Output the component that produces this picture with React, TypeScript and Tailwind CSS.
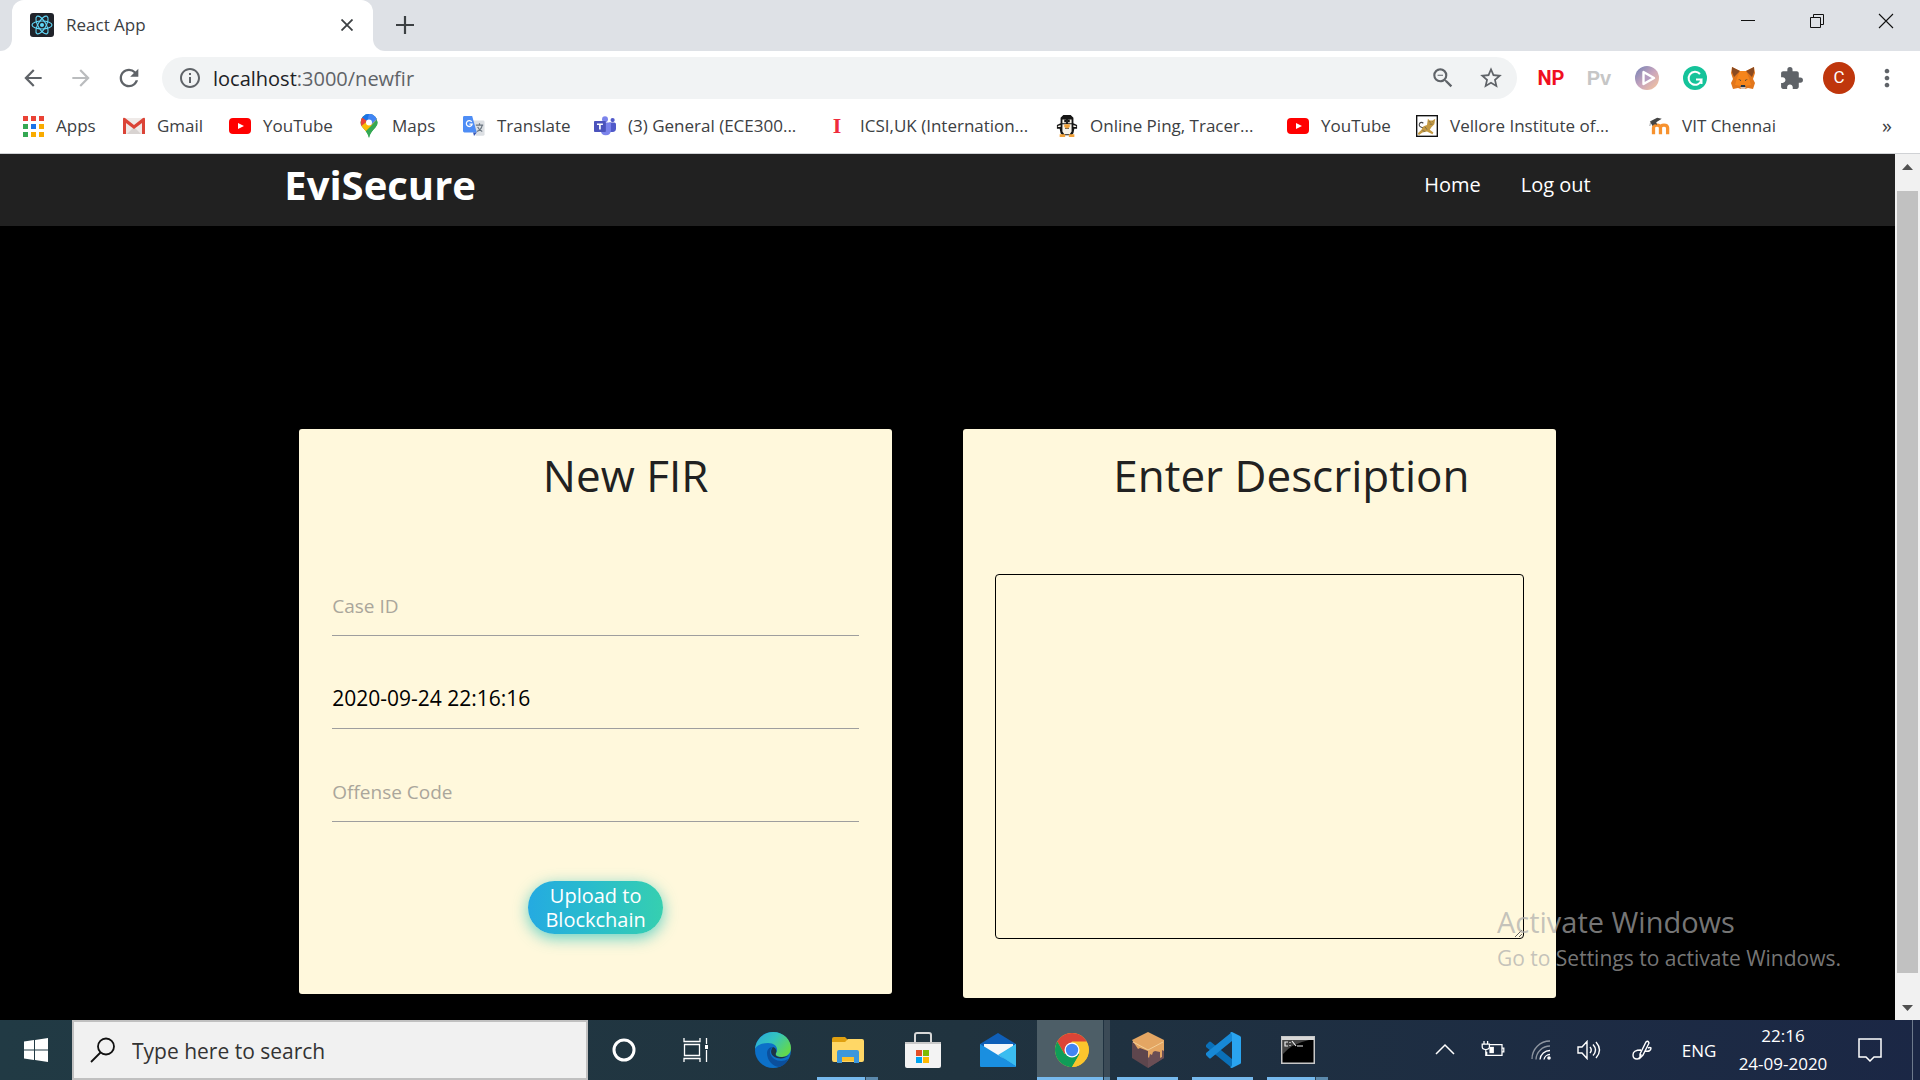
import React from 'react';
import {
  MdArrowBack,
  MdArrowForward,
  MdExtension,
  MdInfoOutline,
  MdMoreVert,
  MdRefresh,
  MdStarBorder,
  MdZoomOut,
} from 'react-icons/md';

interface Bookmark {
  label: string;
  icon: React.ReactNode;
  width: string;
}

const ReactLogo = () => (
  <svg viewBox="0 0 24 24" className="h-6 w-6">
    <rect width="24" height="24" rx="3" fill="#20232a" />
    <g fill="none" stroke="#61dafb" strokeWidth="1.1">
      <ellipse cx="12" cy="12" rx="10" ry="4" />
      <ellipse cx="12" cy="12" rx="10" ry="4" transform="rotate(60 12 12)" />
      <ellipse cx="12" cy="12" rx="10" ry="4" transform="rotate(120 12 12)" />
    </g>
    <circle cx="12" cy="12" r="2" fill="#61dafb" />
  </svg>
);

const AppsIcon = () => (
  <svg viewBox="0 0 22 22" className="h-[22px] w-[22px]">
    <path fill="#ea4335" d="M1 1h5v5H1zM9 1h5v5H9zM17 1h5v5h-5z" />
    <path fill="#34a853" d="M1 9h5v5H1zM1 17h5v5H1z" />
    <path fill="#1a73e8" d="M9 9h5v5H9z" />
    <path fill="#f9ab00" d="M17 9h5v5h-5zM9 17h5v5H9zM17 17h5v5h-5z" />
  </svg>
);

const GmailIcon = () => (
  <svg viewBox="0 0 22 18" className="h-[18px] w-[22px]">
    <rect x="1" y="1" width="20" height="16" rx="1.5" fill="#efeae8" />
    <path fill="#d8d3d1" d="M4 17 11 10l7 7z" />
    <path fill="#db4437" d="M0 2Q0 0 2 1l9 7 9-7q2-1 2 1v15h-3V6l-8 6-8-6v11H0z" />
  </svg>
);

const YouTubeIcon = () => (
  <svg viewBox="0 0 22 18" className="h-[18px] w-[22px]">
    <rect y="1" width="22" height="16" rx="4" fill="#f00" />
    <path fill="#fff" d="m9 6 6 3-6 3z" />
  </svg>
);

const MapsIcon = () => (
  <svg viewBox="0 0 18 24" className="h-6 w-[18px]">
    <clipPath id="pin">
      <path d="M9 0a8.5 8.5 0 0 1 8.5 8.5C17.5 14 10.5 16 9 24 7.5 16 .5 14 .5 8.5A8.5 8.5 0 0 1 9 0z" />
    </clipPath>
    <g clipPath="url(#pin)">
      <path fill="#34a853" d="M0 0h18v24H0z" />
      <path fill="#4285f4" d="M5 0h13v5L9 13z" />
      <path fill="#1a73e8" d="M0 0h9l-1 6-4 3z" />
      <path fill="#ea4335" d="M0 2 7 7l-6 7z" />
      <path fill="#fbbc04" d="m18 4-7 8-6 6-5-5 9-7z" />
      <path fill="#34a853" d="m18 5-8 9-6 5 5 5h9z" />
      <path fill="#4285f4" d="M9 0h9v4l-7 7-3-5z" />
    </g>
    <circle cx="9" cy="8.5" r="3" fill="#fff" />
  </svg>
);

const TranslateIcon = () => (
  <svg viewBox="0 0 24 22" className="h-[22px] w-6">
    <path fill="#dcdfe3" d="M10 5h12q1.5 0 1.5 1.5V20q0 1.5-1.5 1.5h-8z" />
    <path fill="none" stroke="#6b7680" strokeWidth="1.3" d="M14 10h8M18 8v2M21 10q-1 5-6 7M16 12q1 3 5 5" />
    <path fill="#4e8df5" d="M1.5 0H10l5 18H1.5Q0 18 0 16.5v-15Q0 0 1.5 0z" />
    <path fill="#3454b4" d="m11 18 4 0-3 4z" />
    <path fill="none" stroke="#fff" strokeWidth="1.4" d="M9.5 6.5A3.2 3.2 0 1 0 10 9H7" />
  </svg>
);

const TeamsIcon = () => (
  <svg viewBox="0 0 26 24" className="h-6 w-6">
    <circle cx="13" cy="4" r="3.5" fill="#7b83eb" />
    <circle cx="22" cy="5" r="2.5" fill="#5059c9" />
    <path fill="#5059c9" d="M18 8h6q2 0 2 2v5q0 4-4 4h-4z" />
    <path fill="#7b83eb" d="M8 8h12v9q0 6-6 6t-6-6z" />
    <rect y="6" width="14" height="13" rx="1" fill="#4b53bc" />
    <path fill="#fff" d="M3.5 9h7v1.8H8V16H6v-5.2H3.500z" />
  </svg>
);

const SerifMark = () => (
  <span className="font-['Liberation_Serif',serif] text-[22px] leading-6 font-bold text-[#ef2b3c]">I</span>
);

const PenguinIcon = () => (
  <svg viewBox="0 0 24 24" className="h-6 w-6">
    <path fill="#151515" d="M8 0h8l3 3v6l4 2v4h-3l-1 5-2 2H7l-2-2-1-5H1v-4l4-2V3z" />
    <path fill="#f7f3ea" d="M7 5h4v4H7zM13 5h4v4h-4zM7 10h10v8l-2 3H9l-2-3zM2 12l3-1v2H2zM22 12l-3-1v2h3z" />
    <path fill="#151515" d="M9 5h2v3H9zM13 5h2v3h-2zM10 14h4v1h-4z" />
    <path fill="#f2a23a" d="M9 10h6v3l-3 2-3-2zM4 21h6v3H4zM14 21h6v3h-6z" />
  </svg>
);

const TigerIcon = () => (
  <svg viewBox="0 0 24 24" className="h-6 w-6">
    <rect x=".75" y=".75" width="22.5" height="22.5" fill="#fff" stroke="#111" strokeWidth="1.5" />
    <path fill="none" stroke="#444" strokeWidth="1.2" d="M8 14q-6-1-4-5 2-2 4 0" />
    <path fill="#c59a42" d="M13 4l2 2h3l3-2-1 6-3 3-2 3 4 3-1 2-6-3-5 1-4 3-1-2 4-4q1-4 6-5z" />
    <path stroke="#555" strokeWidth=".7" fill="none" d="m10 13 2 3M7 17l3 1M14 7l2 1M18 7l1 1M15 10h3" />
  </svg>
);

const MoodleIcon = () => (
  <svg viewBox="0 0 24 20" className="h-5 w-6">
    <path fill="none" stroke="#f7922f" strokeWidth="3.6" d="M6 19v-7q0-3 3.8-3t3.800 3v7M13.6 12q0-3 3.8-3t4 3v7" />
    <path fill="#444" d="m2 5 8-4 5 1-6 4 1 3q-3-2-5 1z" />
    <path fill="none" stroke="#999" d="M3 5 2 10" />
  </svg>
);

const bookmarks: Bookmark[] = [
  { label: 'Apps', icon: <AppsIcon />, width: 'w-[101px]' },
  { label: 'Gmail', icon: <GmailIcon />, width: 'w-[106px]' },
  { label: 'YouTube', icon: <YouTubeIcon />, width: 'w-[129px]' },
  { label: 'Maps', icon: <MapsIcon />, width: 'w-[105px]' },
  { label: 'Translate', icon: <TranslateIcon />, width: 'w-[131px]' },
  { label: '(3) General (ECE300...', icon: <TeamsIcon />, width: 'w-[232px]' },
  { label: 'ICSI,UK (Internation...', icon: <SerifMark />, width: 'w-[230px]' },
  { label: 'Online Ping, Tracer...', icon: <PenguinIcon />, width: 'w-[231px]' },
  { label: 'YouTube', icon: <YouTubeIcon />, width: 'w-[129px]' },
  { label: 'Vellore Institute of...', icon: <TigerIcon />, width: 'w-[232px]' },
  { label: 'VIT Chennai', icon: <MoodleIcon />, width: 'w-[130px]' },
];

const PlayIcon = () => (
  <svg viewBox="0 0 24 24" className="h-6 w-6">
    <defs>
      <linearGradient id="play" x1="0" y1="0" x2="1" y2="1">
        <stop offset="0" stopColor="#6f7fb5" />
        <stop offset=".5" stopColor="#c8a5bd" />
        <stop offset="1" stopColor="#f8c79b" />
      </linearGradient>
    </defs>
    <circle cx="12" cy="12" r="12" fill="url(#play)" />
    <path fill="#b59cc0" stroke="#fff" strokeWidth="2.4" strokeLinejoin="round" d="M8.5 6v12L19 12z" />
  </svg>
);

const GrammarlyIcon = () => (
  <svg viewBox="0 0 24 24" className="h-6 w-6">
    <circle cx="12" cy="12" r="12" fill="#15c39a" />
    <path fill="none" stroke="#fff" strokeWidth="2" d="M17 8a6.500 6.500 0 1 0 1.500 5.500H13M18.500 13v5" />
  </svg>
);

const FoxIcon = () => (
  <svg viewBox="0 0 24 24" className="h-6 w-6">
    <path fill="#e2761b" d="m1 1 8 4h6l8-4 1 6-2 6 2 4-2 6-5-1-3 1h-4l-3-1-5 1-2-6 2-4-2-6z" />
    <path fill="#8a4a20" d="m1 1 8 4-6 6-2-5zM23 1l-8 4 6 6 2-5z" />
    <path fill="#f6851b" d="M9 5h6l3 7 2 7-6 1h-4l-6-1 2-7z" />
    <path fill="#233447" d="m7 13 3 1v1zM17 13l-3 1v1zM10 19h4l.5 3h-5z" />
    <path fill="#d7c1b3" d="M9 21h6l-1 2h-4z" />
  </svg>
);

const toolbarCell = 'flex h-10 w-12 items-center justify-center';

const BrowserChrome = () => (
  <header className="text-[#3c4043]">
    <div className="flex h-[51px] bg-white">
      <div className="w-3 rounded-br-xl bg-[#dee1e6]" />
      <div className="flex w-[361px] items-center bg-[#dee1e6]">
        <div className="flex h-full w-full items-center rounded-t-xl bg-white pr-4 pb-px pl-[18px]">
          <ReactLogo />
          <span className="ml-3 flex-1 text-[17px]">React App</span>
          <button type="button" aria-label="Close tab" className="flex h-5 w-5 items-center justify-center">
            <svg viewBox="0 0 12 12" className="h-3 w-3">
              <path stroke="#3c4043" strokeWidth="1.8" d="m.5.5 11 11M11.5.5l-11 11" />
            </svg>
          </button>
        </div>
      </div>
      <div className="flex flex-1 rounded-bl-xl bg-[#dee1e6]">
        <button type="button" aria-label="New tab" className="flex h-[50px] w-16 items-center justify-center">
          <svg viewBox="0 0 18 18" className="h-[18px] w-[18px]">
            <path stroke="#3c4043" strokeWidth="2.2" d="M9 0v18M0 9h18" />
          </svg>
        </button>
        <div className="flex-1" />
        <button type="button" aria-label="Minimize" className="flex h-[42px] w-[69px] items-center justify-center">
          <svg viewBox="0 0 16 16" className="h-4 w-4">
            <path stroke="#111" d="M1 7.5h14" />
          </svg>
        </button>
        <button type="button" aria-label="Restore" className="flex h-[42px] w-[69px] items-center justify-center">
          <svg viewBox="0 0 16 16" className="h-4 w-4">
            <path fill="none" stroke="#111" d="M1.5 4.500h10v10h-10zM4.500 4V1.500h10v10H12" />
          </svg>
        </button>
        <button type="button" aria-label="Close" className="flex h-[42px] w-[69px] items-center justify-center">
          <svg viewBox="0 0 16 16" className="h-4 w-4">
            <path stroke="#111" strokeWidth="1.1" d="m1 1 14 14M15 1 1 15" />
          </svg>
        </button>
      </div>
    </div>

    <div className="flex items-center bg-white pt-[6px] pr-[9px] pl-[9px]">
      <button type="button" aria-label="Back" className={toolbarCell}>
        <MdArrowBack size={26} color="#5f6368" />
      </button>
      <button type="button" aria-label="Forward" className={toolbarCell}>
        <MdArrowForward size={26} color="#babcbe" />
      </button>
      <button type="button" aria-label="Reload" className={toolbarCell}>
        <MdRefresh size={28} color="#5f6368" />
      </button>
      <div className="ml-[9px] flex h-[42px] flex-1 items-center rounded-full bg-[#f1f3f4] pr-[2px] pl-4">
        <MdInfoOutline size={24} color="#5f6368" />
        <button type="button" className="ml-[11px] flex-1 pt-[2px] text-left text-[20px] text-[#5f6368]">
          <span className="text-[#202124]">localhost</span>:3000/newfir
        </button>
        <button type="button" aria-label="Zoom" className={toolbarCell}>
          <MdZoomOut size={26} color="#5f6368" />
        </button>
        <button type="button" aria-label="Bookmark this page" className={toolbarCell}>
          <MdStarBorder size={26} color="#5f6368" />
        </button>
      </div>
      <div className="ml-[10px] flex items-center">
        <button type="button" className={toolbarCell}>
          <span className="font-['Roboto',sans-serif] text-[20px] font-bold text-[#f00f1f]">NP</span>
        </button>
        <button type="button" className={toolbarCell}>
          <span className="font-['Liberation_Sans',sans-serif] text-[20px] font-bold text-[#c6c6c6]">Pv</span>
        </button>
        <button type="button" aria-label="Player" className={toolbarCell}><PlayIcon /></button>
        <button type="button" aria-label="Grammarly" className={toolbarCell}><GrammarlyIcon /></button>
        <button type="button" aria-label="MetaMask" className={toolbarCell}><FoxIcon /></button>
        <button type="button" aria-label="Extensions" className={toolbarCell}>
          <MdExtension size={25} color="#5f6368" />
        </button>
        <button type="button" className={toolbarCell}>
          <span className="flex h-8 w-8 items-center justify-center rounded-full bg-[#bf360c] font-['Roboto',sans-serif] text-[17px] text-white">C</span>
        </button>
        <button type="button" aria-label="Menu" className={toolbarCell}>
          <MdMoreVert size={28} color="#5f6368" />
        </button>
      </div>
    </div>

    <div className="flex h-[55px] items-center border-b border-[#d0d2d5] bg-white pr-7 pb-px pl-[22px] text-[17px]">
      {bookmarks.map((b, i) => (
        <a key={i} href="#" className={`flex shrink-0 items-center whitespace-nowrap ${b.width}`}>
          <span className="flex w-[22px] shrink-0 justify-center">{b.icon}</span>
          <span className="ml-3">{b.label}</span>
        </a>
      ))}
      <button type="button" className="ml-auto text-[20px]">»</button>
    </div>
  </header>
);

const SiteNav = () => (
  <nav className="bg-[#212121] pb-[11px] text-white">
    <div className="mx-auto flex h-[61px] w-[70%] items-center justify-between">
      <a href="#" className="text-[40px] leading-none font-bold">EviSecure</a>
      <div className="flex text-[20px]">
        <a href="#" className="px-5">Home</a>
        <a href="#" className="px-5">Log out</a>
      </div>
    </div>
  </nav>
);

const fieldClass =
  'mb-7 block h-[65px] w-full border-b border-[#9e9e9e] bg-transparent pt-1 outline-none placeholder:text-[19px] placeholder:text-[#aaa69b]';

const NewFir = () => (
  <main className="bg-black pt-[203px] pb-[22px]">
    <form className="mx-auto grid w-[70%] grid-cols-2 items-start gap-[71px] pr-[55px] pl-[15px] text-[#212121]">
      <section className="rounded-[3px] bg-[#fff8dc] px-[33px] pt-4 pb-[60px]">
        <h1 className="pl-15 text-center text-[44px] leading-[60px]">New FIR</h1>
        <div className="pt-[66px] text-[21px] text-black">
          <input aria-label="Case ID" placeholder="Case ID" className={fieldClass} />
          <input aria-label="Date and time" defaultValue="2020-09-24 22:16:16" className={fieldClass} />
          <input aria-label="Offense Code" placeholder="Offense Code" className={fieldClass} />
        </div>
        <button
          type="button"
          className="mx-auto mt-[59px] block h-[53px] w-[135px] rounded-full bg-linear-to-r from-[#25aae1] to-[#36cfb0] text-[20px] leading-6 text-white shadow-[0_4px_15px_rgba(49,196,190,0.75)]"
        >
          Upload to Blockchain
        </button>
      </section>
      <section className="rounded-[3px] bg-[#fff8dc] px-8 pt-4 pb-[59px]">
        <h1 className="pl-16 text-center text-[44px] leading-[60px]">Enter Description</h1>
        <textarea
          aria-label="Description"
          className="mt-[69px] block h-[365px] w-full resize rounded border border-black bg-transparent outline-none"
        />
      </section>
    </form>
  </main>
);

const Scrollbar = () => (
  <div className="flex w-[25px] flex-col items-center bg-[#f1f1f1]">
    <svg viewBox="0 0 25 25" className="h-[25px] w-[25px]"><path fill="#505050" d="m7 16 5.5-6 5.500 6z" /></svg>
    <div className="mt-3 mb-[22px] w-[21px] flex-1 bg-[#c1c1c1]" />
    <svg viewBox="0 0 25 25" className="h-[25px] w-[25px]"><path fill="#505050" d="m7 10 5.5 6 5.500-6z" /></svg>
  </div>
);

const EdgeIcon = () => (
  <svg viewBox="0 0 36 36" className="h-9 w-9">
    <defs>
      <linearGradient id="edgeTop" x1="0" y1="0" x2="1" y2=".6">
        <stop offset="0" stopColor="#2aa7dc" />
        <stop offset=".5" stopColor="#33c3c0" />
        <stop offset="1" stopColor="#62d84e" />
      </linearGradient>
    </defs>
    <circle cx="18" cy="18" r="18" fill="#0c70c8" />
    <path fill="url(#edgeTop)" d="M0 17C1 7 9 0 18 0c11 0 18 8 18 16 0 6-5 9-9 9-5 0-7-2-6-4 3-4 0-10-8-10C7 11 2 13 0 17z" />
    <path fill="#0b4f9c" d="M12 21c0 7 5 13 12 14 4-1 8-4 9-8-6 4-16 2-18-6 0-3 1-5 3-6-4 0-6 3-6 6z" />
    <path fill="#1d3445" d="M18 15c-3 3-3 9 4 11 5 1 9 0 12-3-3 2-6 2-8 2-5 0-6-2-5-4 1-2 0-5-3-6z" />
  </svg>
);

const FolderIcon = () => (
  <svg viewBox="0 0 34 30" className="h-[30px] w-[34px]">
    <path fill="#e0a010" d="M1 4q0-2 2-2h11l3 3-2 4H1z" />
    <path fill="#ffd766" d="M1 7h13l3-3h14q2 0 2 2v19q0 2-2 2H3q-2 0-2-2z" />
    <path fill="#3c97dd" d="M6 17q0-2 2-2h18q2 0 2 2v11h-5v-6H11v6H6z" />
    <path fill="#fbc02d" d="M11 22h12v4H11z" />
  </svg>
);

const StoreIcon = () => (
  <svg viewBox="0 0 36 36" className="h-9 w-9">
    <path fill="none" stroke="#d8d8d8" strokeWidth="2" d="M10 12V3q0-2 2-2h12q2 0 2 2v9" />
    <path fill="#f3f3f3" d="M0 10h36v24q0 2-2 2H2q-2 0-2-2z" />
    <path fill="#c9c9c9" d="M0 10h36v2H0z" />
    <path fill="#e34f26" d="M11 18h6v6h-6z" />
    <path fill="#7fba00" d="M18 18h6v6h-6z" />
    <path fill="#00a4ef" d="M11 25h6v6h-6z" />
    <path fill="#ffb900" d="M18 25h6v6h-6z" />
  </svg>
);

const MailIcon = () => (
  <svg viewBox="0 0 36 34" className="h-[34px] w-9">
    <path fill="#0f5fb8" d="M0 11 18 0l18 11v6H0z" />
    <path fill="#f5f7f9" d="M4 11h29v9l-14 8L4 20z" />
    <path fill="#35b5ee" d="m36 11-18 11L36 34z" />
    <path fill="#1a8fe0" d="m0 11 36 22q0 1-1 1H1q-1 0-1-1z" />
    <path fill="#3bbdf0" d="m36 11-16 11 16 11z" />
  </svg>
);

const ChromeIcon = () => (
  <svg viewBox="0 0 34 34" className="h-[34px] w-[34px]">
    <circle cx="17" cy="17" r="17" fill="#fbc52d" />
    <path fill="#db4437" d="M2.3 8.500A17 17 0 0 1 31.700 8.500H17L9.500 21z" />
    <path fill="#109d58" d="M2.3 8.500A17 17 0 0 0 17 34l7.500-13-7.500-4-7.500 4z" />
    <path fill="#fbc52d" d="M17 34A17 17 0 0 0 31.700 9H17l7.500 12.500z" />
    <circle cx="17" cy="17" r="7.500" fill="#fff" />
    <circle cx="17" cy="17" r="6.200" fill="#4285f4" />
  </svg>
);

const GanacheIcon = () => (
  <svg viewBox="0 0 32 36" className="h-9 w-8">
    <path fill="#5e464d" d="m0 10 16-8 16 8v16L16 36 0 26z" />
    <path fill="#6a4e55" d="M16 18 32 10v16L16 36z" />
    <path fill="#e4a663" d="m0 8 16-8 16 8v11l-2-1v7l-2 1v-6l-5-1-2 1-1 3-2-1-1 4-1-1v-6l-8-3-2 1-2-3z" />
    <path fill="none" stroke="#f3cf98" d="m1 10 15 8 15-8" />
  </svg>
);

const VsCodeIcon = () => (
  <svg viewBox="0 0 36 36" className="h-9 w-9">
    <path fill="#0a70b8" d="m1 13 3-3q1-1 2 0l21 17v9L1 15z" />
    <path fill="#1789d6" d="m1 23 3 3q1 1 2 0L27 9V0L1 21z" />
    <path fill="#2aa4ef" d="m27 0 8 4q1 .5 1 1.500v25q0 1-1 1.500l-8 4q-1 0-2-1 2 0 2-2V3q0-2-2-2 1-1 2-1z" />
  </svg>
);

const TerminalIcon = () => (
  <svg viewBox="0 0 34 28" className="h-7 w-[34px]">
    <rect x=".75" y=".75" width="32.5" height="26.500" fill="#000" stroke="#c8c8c8" strokeWidth="1.5" />
    <path fill="#d8d8d8" d="M1 1h32v3H1z" />
    <path fill="#444" d="M2 4h26Q10 8 2 18z" />
    <path fill="none" stroke="#eee" strokeWidth="1.2" d="M7 6H4v4h3M9 6v1M9 9v1M11 5l4 5M16 10h6" />
  </svg>
);

interface TaskButtonProps {
  label: string;
  children: React.ReactNode;
  running?: boolean;
  stacked?: boolean;
}

const TaskButton: React.FC<TaskButtonProps> = ({ label, children, running, stacked }) => (
  <button type="button" aria-label={label} className="flex h-full w-[75px] flex-col items-center">
    <span className="flex flex-1 items-center pt-[3px]">{children}</span>
    <span className="flex h-[3px] w-[61px]">
      {running && <span className="flex-1 bg-[#76b9ed]" />}
      {stacked && <span className="w-[13px] border-l border-[#2b4152] bg-[#5b89ac]" />}
    </span>
  </button>
);

const trayButton = 'flex h-full w-12 items-center justify-center';

const Taskbar = () => (
  <footer className="flex h-[60px] bg-linear-to-r from-[#213a44] via-[#20333f] to-[#1b2745] text-white">
    <button type="button" aria-label="Start" className="flex w-[72px] items-center justify-center">
      <svg viewBox="0 0 24 24" className="h-6 w-6">
        <path fill="#fff" d="m0 3.5 10-1.500v9.500H0zM11 1.900 24 0v11.500H11zM0 12.500h10V22L0 20.500zM11 12.500h13V24l-13-1.900z" />
      </svg>
    </button>
    <div className="flex w-[516px] items-center border-2 border-[#c0c0c0] bg-[#f1f1f1] pl-4">
      <svg viewBox="0 0 26 26" className="h-[26px] w-[26px]">
        <circle cx="16" cy="9.5" r="8" fill="none" stroke="#111" strokeWidth="1.8" />
        <path stroke="#111" strokeWidth="1.8" d="M10.5 15.500 1 25" />
      </svg>
      <input
        aria-label="Type here to search"
        placeholder="Type here to search"
        className="ml-4 flex-1 bg-transparent pt-1 text-[21px] outline-none placeholder:text-[#333]"
      />
    </div>
    <button type="button" aria-label="Cortana" className="flex w-[72px] items-center justify-center">
      <svg viewBox="0 0 24 24" className="h-6 w-6">
        <circle cx="12" cy="12" r="10" fill="none" stroke="#fff" strokeWidth="3" />
      </svg>
    </button>
    <button type="button" aria-label="Task view" className="flex w-[72px] items-center justify-center">
      <svg viewBox="0 0 26 24" className="h-6 w-[26px]">
        <path fill="none" stroke="#fff" strokeWidth="1.3" d="M1 0v3.500h16V0M1 24v-3.500h16V24M1.500 6.500h15v11h-15zM23.500 0v6M23.500 12v12" />
        <path fill="#fff" d="M22 7h3v4h-3z" />
      </svg>
    </button>
    <div className="flex pl-[3px]">
      <TaskButton label="Microsoft Edge"><EdgeIcon /></TaskButton>
      <TaskButton label="File Explorer" running stacked><FolderIcon /></TaskButton>
      <TaskButton label="Microsoft Store"><StoreIcon /></TaskButton>
      <TaskButton label="Mail"><MailIcon /></TaskButton>
      <button type="button" aria-label="Google Chrome" className="ml-[2px] flex w-[73px]">
        <span className="flex h-full w-[66px] flex-col items-center justify-center border-b-[3px] border-[#76b9ed] bg-[#4d5e67] pt-[3px] pl-1">
          <ChromeIcon />
        </span>
        <span className="ml-px h-full w-[6px] border-b-[3px] border-[#5b89ac] bg-[#3b4a56]" />
      </button>
      <TaskButton label="Ganache" running><GanacheIcon /></TaskButton>
      <TaskButton label="Visual Studio Code" running><VsCodeIcon /></TaskButton>
      <TaskButton label="Command Prompt" running stacked><TerminalIcon /></TaskButton>
    </div>

    <div className="ml-auto flex h-full items-center">
      <button type="button" aria-label="Show hidden icons" className={trayButton}>
        <svg viewBox="0 0 20 20" className="h-5 w-5"><path fill="none" stroke="#fff" strokeWidth="1.5" d="m1 14 9-9 9 9" /></svg>
      </button>
      <button type="button" aria-label="Battery" className={trayButton}>
        <svg viewBox="0 0 26 20" className="h-[18px] w-6">
          <path fill="none" stroke="#fff" strokeWidth="1.4" d="M9 4h14v12H6v-4M23.500 8H25v4h-1.500M3 0v3M7 0v3M1 3.500h8v3q0 3-4 3t-4-3zM5 9.500V16h3" />
          <path fill="#fff" d="M9 6.500h5v7H9z" />
        </svg>
      </button>
      <button type="button" aria-label="Network" className={trayButton}>
        <svg viewBox="0 0 20 20" className="h-5 w-5">
          <g fill="none" stroke="#fff" strokeWidth="1.3">
            <path opacity=".5" d="M1 19A18 18 0 0 1 19 1M5 19.500A14 14 0 0 1 19 6" />
            <path d="M9 19.5A10 10 0 0 1 19 10.500M13 19.500A6 6 0 0 1 19 14.500" />
          </g>
          <circle cx="18" cy="18" r="1.8" fill="#fff" />
        </svg>
      </button>
      <button type="button" aria-label="Volume" className={trayButton}>
        <svg viewBox="0 0 24 20" className="h-5 w-6">
          <path fill="none" stroke="#fff" strokeWidth="1.4" d="M1 7h4l5-5.500v17L5 13H1zM13 7q2.500 3 0 6M16 4.500q5 5.500 0 11M19 2q7 8 0 16" />
        </svg>
      </button>
      <button type="button" aria-label="Windows Ink" className="flex h-full w-[58px] items-center justify-center">
        <svg viewBox="0 0 20 20" className="h-5 w-5">
          <path fill="none" stroke="#fff" strokeWidth="1.4" d="M8 14 14 2q2-2 3 1l-6 12-3 3zM9 10Q1 10 1 15q0 4 4 4 3 0 4-5M13 11q6 1 6-3-1-1-3 0" />
        </svg>
      </button>
      <button type="button" className="w-14 pt-px text-center text-[17px]">ENG</button>
      <button type="button" className="w-[112px] text-center text-[17px] leading-7">
        22:16
        <br />
        24-09-2020
      </button>
      <button type="button" aria-label="Notifications" className="flex h-full w-[62px] items-center justify-center">
        <svg viewBox="0 0 24 24" className="h-6 w-6">
          <path fill="none" stroke="#fff" strokeWidth="1.5" d="M1 1h22v18h-7l-4 4-4-4H1z" />
        </svg>
      </button>
      <button type="button" aria-label="Show desktop" className="ml-[11px] h-full w-2 border-l border-[#6d7a8c]" />
    </div>
  </footer>
);

export default function App() {
  return (
    <div className="flex min-h-screen flex-col bg-black font-['Open_Sans','Noto_Sans',sans-serif]">
      <BrowserChrome />
      <div className="relative flex flex-1">
        <div className="min-w-0 flex-1">
          <SiteNav />
          <NewFir />
        </div>
        <Scrollbar />
        <div className="pointer-events-none absolute right-[79px] bottom-[46px] text-[#ababab]/70">
          <p className="text-[29px] leading-10">Activate Windows</p>
          <p className="text-[21px] leading-8">Go to Settings to activate Windows.</p>
        </div>
      </div>
      <Taskbar />
    </div>
  );
}
